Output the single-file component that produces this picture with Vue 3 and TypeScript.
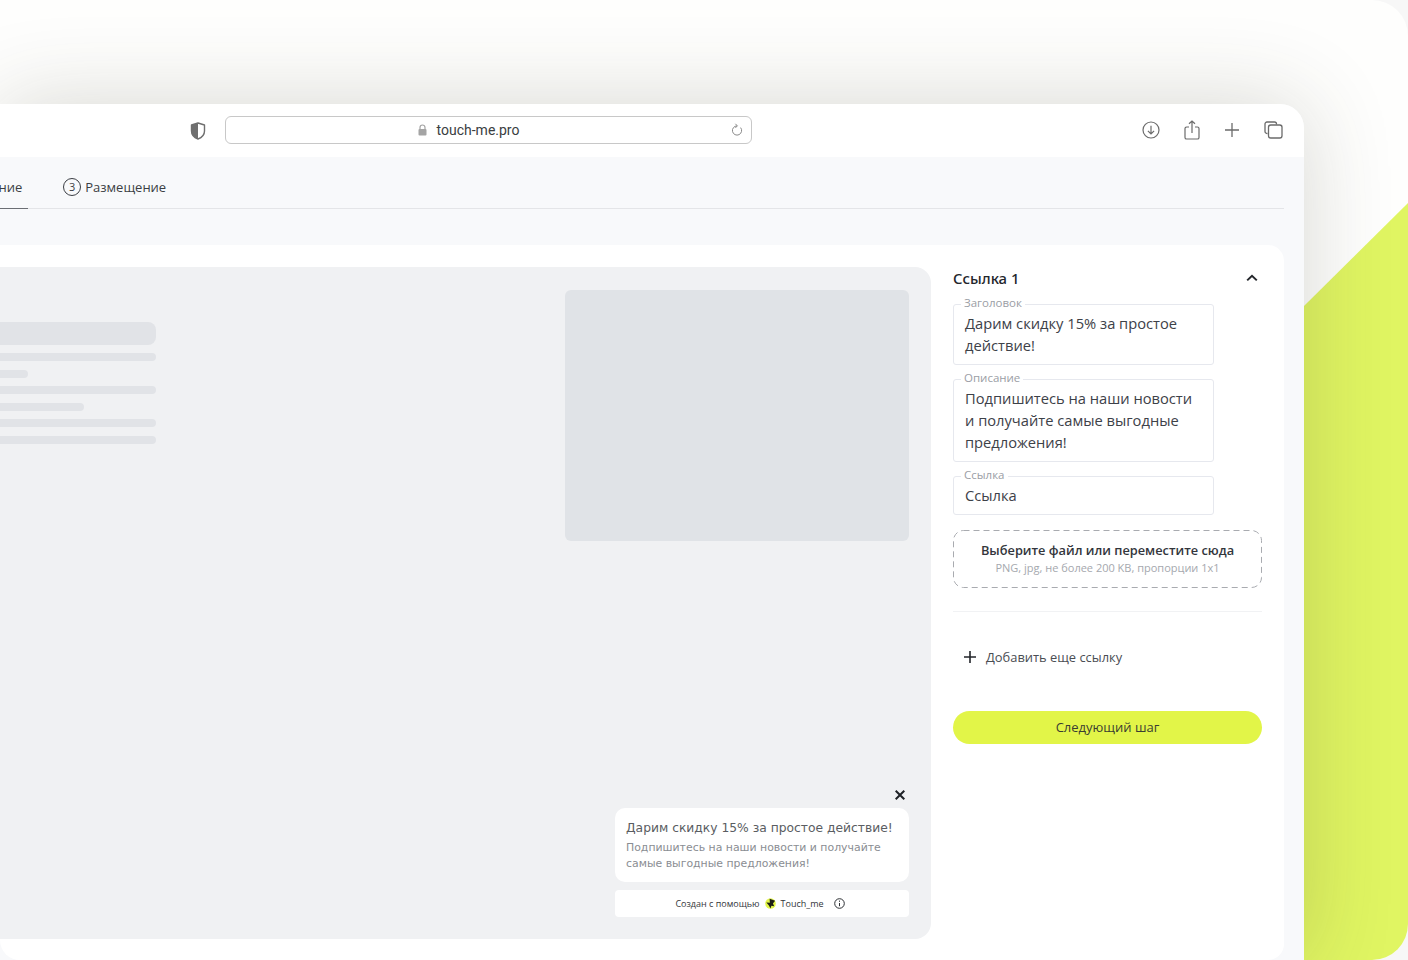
<template>
  <div class="canvas">
    <div class="backdrop"></div>
    <div class="browser">
      <header class="toolbar">
        <svg class="shield" width="16" height="18" viewBox="0 0 16 18">
          <path d="M8 1 L14.5 3 V9 C14.5 13 11.5 15.7 8 17 C4.5 15.7 1.5 13 1.5 9 V3 Z" fill="#fff" stroke="#6f6f6f" stroke-width="1.4" stroke-linejoin="round" />
          <path d="M8 1 L1.5 3 V9 C1.5 13 4.5 15.7 8 17 Z" fill="#6f6f6f" />
        </svg>
        <div class="address">
          <svg width="9" height="12" viewBox="0 0 9 12">
            <path d="M2 5.5 V3.4 C2 2 3.1 1 4.5 1 S7 2 7 3.4 V5.5" fill="none" stroke="#a4a4a4" stroke-width="1.2" />
            <rect x="0.5" y="5" width="8" height="6.5" rx="1" fill="#a4a4a4" />
          </svg>
          <span class="url">touch-me.pro</span>
          <svg class="reload" width="12" height="14" viewBox="0 0 12 14">
            <path d="M6 2.9 A4.6 4.6 0 1 0 9.6 4.6" fill="none" stroke="#8a8a8a" stroke-width="1" />
            <path d="M4.4 0.8 L6.4 2.9 L4.4 4.9" fill="none" stroke="#8a8a8a" stroke-width="1" />
          </svg>
        </div>
        <div class="tools">
          <svg width="18" height="18" viewBox="0 0 18 18" fill="none" stroke="#6b6b6b" stroke-width="1.2">
            <circle cx="9" cy="9" r="8" />
            <path d="M9 4.8 V12.8 M5.9 9.8 L9 12.9 L12.1 9.8" />
          </svg>
          <svg width="16" height="20" viewBox="0 0 16 20" fill="none" stroke="#6b6b6b" stroke-width="1.2">
            <path d="M5 7 H2.6 C1.7 7 1 7.7 1 8.6 V17.4 C1 18.3 1.7 19 2.6 19 H13.4 C14.3 19 15 18.3 15 17.4 V8.6 C15 7.7 14.3 7 13.4 7 H11" />
            <path d="M8 13 V1 M5 3.8 L8 1 L11 3.8" />
          </svg>
          <svg width="16" height="16" viewBox="0 0 16 16" fill="none" stroke="#6b6b6b" stroke-width="1.3">
            <path d="M8 1 V15 M1 8 H15" />
          </svg>
          <svg width="19" height="18" viewBox="0 0 19 18" fill="none" stroke="#6b6b6b" stroke-width="1.3">
            <path d="M3.5 12.5 H3 C1.9 12.5 1 11.6 1 10.5 V3 C1 1.9 1.9 1 3 1 H10.5 C11.6 1 12.5 1.9 12.5 3 V3.5" />
            <rect x="4.5" y="4" width="13.5" height="13" rx="2.2" />
          </svg>
        </div>
      </header>

      <main class="page">
        <nav class="steps">
          <div class="step step-active">Оформление</div>
          <div class="step"><span class="step-num">3</span>Размещение</div>
        </nav>

        <section class="panel">
          <div class="preview">
            <div class="skeleton">
              <div class="bar bar-big"></div>
              <div v-for="(w, i) in skeletonRows" :key="i" class="bar" :style="{ width: w + 'px' }"></div>
            </div>
            <div class="preview-side">
              <div class="placeholder"></div>
              <div class="widget">
                <svg class="close" width="10" height="10" viewBox="0 0 10 10" fill="none" stroke="#1e2126" stroke-width="2">
                  <path d="M0.7 0.7 L9.3 9.3 M9.3 0.7 L0.7 9.3" />
                </svg>
                <div class="widget-card">
                  <div class="widget-title">Дарим скидку 15% за простое действие!</div>
                  <div class="widget-text">Подпишитесь на наши новости и получайте самые выгодные предложения!</div>
                </div>
                <div class="widget-foot">
                  <span>Создан с помощью</span>
                  <svg class="logo" width="11" height="11" viewBox="0 0 10 10">
                    <circle cx="5" cy="5" r="4.8" fill="#e2f548" />
                    <path d="M1.2 4.2 L4.4 4.4 L4.2 0.6 L9.2 2.4 L7.2 5 L8.4 7.4 L5.8 7 L5 9.6 L3.4 6.6 Z" fill="#1d1f16" />
                  </svg>
                  <span>Touch_me</span>
                  <svg class="info" width="11" height="11" viewBox="0 0 11 11" fill="none" stroke="#2c2f33">
                    <circle cx="5.5" cy="5.5" r="4.8" />
                    <path d="M5.5 5 V8.2 M5.5 2.6 V3.8" />
                  </svg>
                </div>
              </div>
            </div>
          </div>

          <aside class="form">
            <div class="form-head">
              <span>Ссылка 1</span>
              <svg width="12" height="8" viewBox="0 0 12 8" fill="none" stroke="#23262b" stroke-width="2">
                <path d="M1.2 6.4 L6 1.8 L10.8 6.4" />
              </svg>
            </div>
            <div v-for="field in fields" :key="field.label" class="field">
              <span class="field-label">{{ field.label }}</span>
              <div class="field-value">{{ field.value }}</div>
            </div>
            <div class="drop">
              <svg class="drop-border" width="309" height="58">
                <rect x="0.5" y="0.5" width="308" height="57" rx="10" fill="none" stroke="#a9abb0" stroke-dasharray="6 4" />
              </svg>
              <div class="drop-title">Выберите файл или переместите сюда</div>
              <div class="drop-hint">PNG, jpg, не более 200 KB, пропорции 1х1</div>
            </div>
            <div class="divider"></div>
            <div class="add">
              <svg width="14" height="14" viewBox="0 0 14 14" fill="none" stroke="#23262b" stroke-width="1.6">
                <path d="M7 1 V13 M1 7 H13" />
              </svg>
              <span>Добавить еще ссылку</span>
            </div>
            <button class="next" type="button">Следующий шаг</button>
          </aside>
        </section>
      </main>
    </div>
  </div>
</template>

<script setup lang="ts">
interface Field {
  label: string
  value: string
}

// the page edge cuts the bars, so they start a bit left of x=0
const skeletonRows: number[] = [186, 58, 186, 114, 186, 186]

const fields: Field[] = [
  { label: 'Заголовок', value: 'Дарим скидку 15% за простое действие!' },
  { label: 'Описание', value: 'Подпишитесь на наши новости и получайте самые выгодные предложения!' },
  { label: 'Ссылка', value: 'Ссылка' }
]
</script>

<style>
html, body {
  margin: 0;
  background: #f7f7f7;
}
</style>

<style scoped>
.canvas {
  position: relative;
  width: 1408px;
  height: 960px;
  overflow: hidden;
  border-radius: 0 36px 36px 0;
  background: #fefefd;
  font-family: "Open Sans", "Noto Sans", sans-serif;
  color: #2b2e33;
}

.backdrop {
  position: absolute;
  inset: 0;
  background: #e0f562;
  clip-path: polygon(1304px 306px, 1408px 203px, 1408px 960px, 1304px 960px);
}

.browser {
  position: relative;
  top: 104px;
  width: 1304px;
  height: 856px;
  border-radius: 0 24px 0 0;
  background: #f8f9fb;
  box-shadow: 0 0 90px rgba(60, 60, 40, 0.2);
}

.toolbar {
  display: flex;
  align-items: center;
  height: 53px;
  padding: 0 21px 0 190px;
  border-radius: 0 24px 0 0;
  background: #fff;
}

.shield {
  margin-right: 19px;
}

.address {
  position: relative;
  display: flex;
  align-items: center;
  justify-content: center;
  gap: 10px;
  width: 527px;
  height: 28px;
  margin-bottom: 2px;
  box-sizing: border-box;
  border: 1px solid #c8c8c8;
  border-radius: 6px;
  padding-right: 40px;
}

.url {
  font-family: Roboto, sans-serif;
  font-size: 14px;
  color: #3a3d41;
}

.reload {
  position: absolute;
  right: 8px;
  top: 6px;
}

.tools {
  display: flex;
  align-items: center;
  gap: 24px;
  margin-left: auto;
  margin-bottom: 1px;
}

.page {
  height: 803px;
  overflow: hidden;
}

.steps {
  display: flex;
  align-items: stretch;
  gap: 35px;
  height: 51px;
  margin: 0 20px 0 -61px;
  border-bottom: 1px solid #e4e5e8;
  font-size: 13px;
  color: #3b3e44;
}

.step {
  display: flex;
  align-items: center;
  gap: 4px;
  padding-top: 8px;
}

.step-active {
  padding-right: 6px;
  border-bottom: 1px solid #6b6e74;
  margin-bottom: -1px;
}

.step-num {
  display: flex;
  align-items: center;
  justify-content: center;
  width: 18px;
  height: 18px;
  box-sizing: border-box;
  border: 1px solid #3b3e44;
  border-radius: 50%;
  font-size: 11px;
}

.panel {
  display: flex;
  gap: 22px;
  height: 715px;
  margin: 36px 20px 0 0;
  box-sizing: border-box;
  padding: 22px 22px 0 0;
  border-radius: 0 16px 16px 20px;
  background: #fff;
}

.preview {
  display: flex;
  justify-content: space-between;
  width: 931px;
  height: 672px;
  box-sizing: border-box;
  padding: 22px;
  border-radius: 0 16px 16px 0;
  background: #f0f1f3;
}

.skeleton {
  display: flex;
  flex-direction: column;
  align-items: flex-start;
  gap: 8.5px;
  margin: 33px 0 0 -52px;
}

.bar {
  height: 8px;
  border-radius: 4px;
  background: #e1e3e7;
}

.bar-big {
  width: 186px;
  height: 22.5px;
  border-radius: 8px;
}

.preview-side {
  display: flex;
  flex-direction: column;
  width: 344px;
}

.placeholder {
  height: 251px;
  margin-top: 1px;
  border-radius: 6px;
  background: #e0e3e7;
}

.widget {
  display: flex;
  flex-direction: column;
  align-self: flex-end;
  width: 294px;
  margin-top: auto;
}

.close {
  align-self: flex-end;
  margin: 0 4px 8px 0;
}

.widget-card {
  height: 74px;
  box-sizing: border-box;
  padding: 11px 11px 0;
  border-radius: 10px;
  background: #fff;
  font-family: "DejaVu Sans", sans-serif;
}

.widget-title {
  font-size: 12.3px;
  line-height: 18px;
  color: #5a5d62;
  white-space: nowrap;
}

.widget-text {
  margin-top: 3px;
  font-size: 10.9px;
  line-height: 16px;
  color: #8a8d92;
}

.widget-foot {
  display: flex;
  align-items: center;
  justify-content: center;
  gap: 5px;
  height: 27px;
  margin-top: 8px;
  padding-right: 4px;
  border-radius: 4px;
  background: #fff;
  font-size: 9px;
  color: #33363a;
}

.info {
  margin-left: 5px;
}

.form {
  flex: 1;
  display: flex;
  flex-direction: column;
  align-items: stretch;
}

.form-head {
  display: flex;
  align-items: center;
  justify-content: space-between;
  padding: 0 4px 0 0;
  height: 21px;
  margin-bottom: 16px;
  font-family: "Noto Sans", sans-serif;
  font-size: 14.9px;
  font-weight: 500;
  color: #23262b;
}

.field {
  position: relative;
  width: 261px;
  box-sizing: border-box;
  padding: 6.5px 11px 8.1px;
  margin-bottom: 14.6px;
  border: 1px solid #e6e8ee;
  border-radius: 3px;
}

.field-label {
  position: absolute;
  top: -9px;
  left: 7px;
  padding: 0 3px;
  background: #fff;
  font-size: 11.5px;
  line-height: 14px;
  color: #9b9ea5;
}

.field-value {
  font-size: 14.7px;
  line-height: 22px;
  color: #3d4148;
}

.drop {
  position: relative;
  height: 58px;
  box-sizing: border-box;
  padding-top: 11px;
  text-align: center;
}

.drop-border {
  position: absolute;
  top: 0;
  left: 0;
}

.drop-title {
  font-size: 12.8px;
  line-height: 18px;
  font-weight: 600;
  color: #33363c;
}

.drop-hint {
  margin-top: 1px;
  font-size: 11px;
  line-height: 16px;
  color: #a5a8ae;
}

.divider {
  height: 1px;
  margin-top: 23px;
  background: #f1f2f4;
}

.add {
  display: flex;
  align-items: center;
  gap: 9px;
  margin: 36px 0 45px 10px;
  height: 18px;
  font-size: 12.9px;
  color: #4a4d53;
}

.next {
  height: 33px;
  border: 0;
  border-radius: 17px;
  background: #e2f548;
  font-family: inherit;
  font-size: 13px;
  color: #3a3d32;
}
</style>
